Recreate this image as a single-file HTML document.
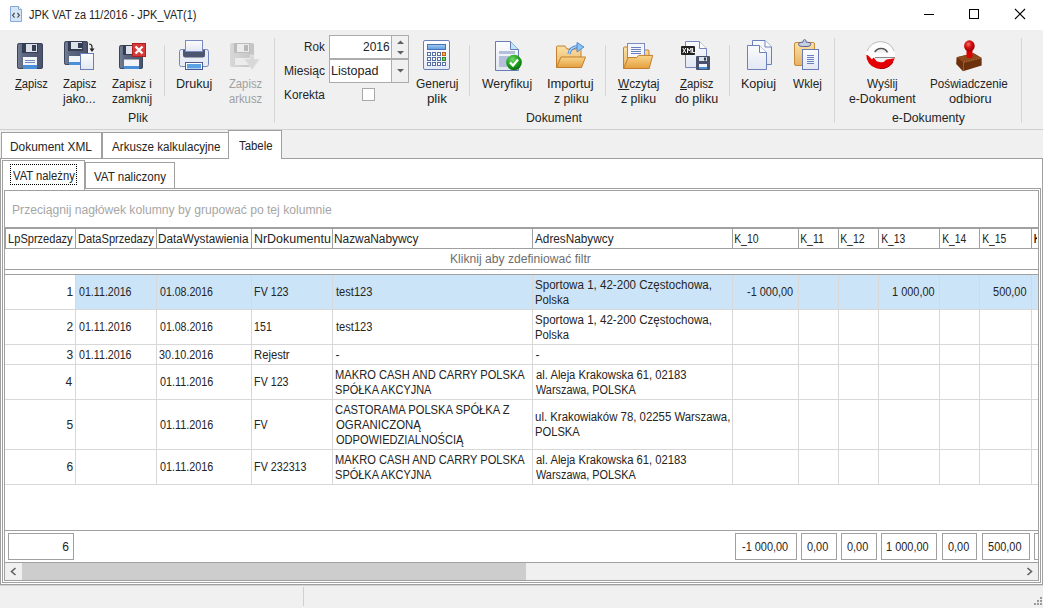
<!DOCTYPE html>
<html><head><meta charset="utf-8"><style>
html,body{margin:0;padding:0;} div{box-sizing:border-box}
body{width:1043px;height:608px;overflow:hidden;position:relative;background:#f0f0f0;font-family:"Liberation Sans",sans-serif;font-size:12px;}
.t{position:absolute;white-space:nowrap;font-size:12px;line-height:15px;height:15px;}
u{text-decoration:underline;text-underline-offset:1px}
</style></head><body>
<div style="position:absolute;left:0px;top:0px;width:1043px;height:30px;background:#fff"></div><div style="position:absolute;left:0px;top:129px;width:1043px;height:1px;background:#cfcfcf"></div><div style="position:absolute;left:274px;top:38px;width:1px;height:85px;background:#d5d5d5"></div><div style="position:absolute;left:834px;top:38px;width:1px;height:85px;background:#d5d5d5"></div><div style="position:absolute;left:1021px;top:38px;width:1px;height:85px;background:#d5d5d5"></div><div style="position:absolute;left:164px;top:45px;width:1px;height:51px;background:#d5d5d5"></div><div style="position:absolute;left:469px;top:45px;width:1px;height:51px;background:#d5d5d5"></div><div style="position:absolute;left:605px;top:45px;width:1px;height:51px;background:#d5d5d5"></div><div style="position:absolute;left:729px;top:45px;width:1px;height:51px;background:#d5d5d5"></div><div style="position:absolute;left:329px;top:35px;width:80px;height:24px;background:#fff;border:1px solid #acacac;box-sizing:border-box"></div><div style="position:absolute;left:329px;top:59px;width:80px;height:24px;background:#fff;border:1px solid #acacac;box-sizing:border-box"></div><div style="position:absolute;left:391px;top:36px;width:17px;height:22px;background:#f0f0f0;border-left:1px solid #acacac"></div><div style="position:absolute;left:391px;top:60px;width:17px;height:22px;background:#f0f0f0;border-left:1px solid #acacac"></div><div style="position:absolute;left:362px;top:88px;width:13px;height:13px;background:#fff;border:1px solid #a8a8a8"></div><div style="position:absolute;left:1px;top:132px;width:101px;height:27px;background:#fff;border:1px solid #a0a0a0;border-bottom:none;box-sizing:border-box"></div><div style="position:absolute;left:102px;top:132px;width:127px;height:27px;background:#fff;border:1px solid #a0a0a0;border-bottom:none;box-sizing:border-box"></div><div style="position:absolute;left:0px;top:158px;width:1043px;height:427px;background:#fff;border:1px solid #a0a0a0;box-sizing:border-box"></div><div style="position:absolute;left:228px;top:130px;width:54px;height:29px;background:#fff;border:1px solid #a0a0a0;border-bottom:none;box-sizing:border-box"></div><div style="position:absolute;left:85px;top:162px;width:90px;height:27px;background:#fff;border:1px solid #a0a0a0;border-bottom:none;box-sizing:border-box"></div><div style="position:absolute;left:2px;top:188px;width:1039px;height:395px;background:#fff;border:1px solid #a0a0a0;box-sizing:border-box"></div><div style="position:absolute;left:2px;top:160px;width:83px;height:30px;background:#fff;border:1px solid #a0a0a0;border-bottom:none;box-sizing:border-box"></div><div style="position:absolute;left:10px;top:164px;width:67px;height:21px;border:1px dotted #000;box-sizing:border-box"></div><div style="position:absolute;left:4px;top:190px;width:1035px;height:391px;background:#fff;border:1px solid #a0a0a0;box-sizing:border-box"></div><div style="position:absolute;left:5px;top:227px;width:1033px;height:1px;background:#a0a0a0"></div><div style="position:absolute;left:5px;top:228px;width:1033px;height:1px;background:#a0a0a0"></div><div style="position:absolute;left:5px;top:248px;width:1033px;height:1px;background:#a0a0a0"></div><div style="position:absolute;left:5px;top:229px;width:1px;height:19px;background:#a0a0a0"></div><div style="position:absolute;left:75px;top:229px;width:1px;height:19px;background:#a0a0a0"></div><div style="position:absolute;left:156px;top:229px;width:1px;height:19px;background:#a0a0a0"></div><div style="position:absolute;left:251px;top:229px;width:1px;height:19px;background:#a0a0a0"></div><div style="position:absolute;left:332px;top:229px;width:1px;height:19px;background:#a0a0a0"></div><div style="position:absolute;left:532px;top:229px;width:1px;height:19px;background:#a0a0a0"></div><div style="position:absolute;left:732px;top:229px;width:1px;height:19px;background:#a0a0a0"></div><div style="position:absolute;left:798px;top:229px;width:1px;height:19px;background:#a0a0a0"></div><div style="position:absolute;left:838px;top:229px;width:1px;height:19px;background:#a0a0a0"></div><div style="position:absolute;left:878px;top:229px;width:1px;height:19px;background:#a0a0a0"></div><div style="position:absolute;left:939px;top:229px;width:1px;height:19px;background:#a0a0a0"></div><div style="position:absolute;left:979px;top:229px;width:1px;height:19px;background:#a0a0a0"></div><div style="position:absolute;left:1031px;top:229px;width:1px;height:19px;background:#a0a0a0"></div><div style="position:absolute;left:5px;top:269px;width:1033px;height:1px;background:#a0a0a0"></div><div style="position:absolute;left:5px;top:274px;width:1033px;height:1px;background:#a0a0a0"></div><div style="position:absolute;left:76px;top:275px;width:962px;height:34px;background:#cce4f7"></div><div style="position:absolute;left:5px;top:309px;width:1033px;height:1px;background:#d8d8d8"></div><div style="position:absolute;left:5px;top:344px;width:1033px;height:1px;background:#d8d8d8"></div><div style="position:absolute;left:5px;top:364px;width:1033px;height:1px;background:#d8d8d8"></div><div style="position:absolute;left:5px;top:399px;width:1033px;height:1px;background:#d8d8d8"></div><div style="position:absolute;left:5px;top:449px;width:1033px;height:1px;background:#d8d8d8"></div><div style="position:absolute;left:5px;top:484px;width:1033px;height:1px;background:#d8d8d8"></div><div style="position:absolute;left:75px;top:275px;width:1px;height:209px;background:#d8d8d8"></div><div style="position:absolute;left:156px;top:275px;width:1px;height:209px;background:#d8d8d8"></div><div style="position:absolute;left:251px;top:275px;width:1px;height:209px;background:#d8d8d8"></div><div style="position:absolute;left:332px;top:275px;width:1px;height:209px;background:#d8d8d8"></div><div style="position:absolute;left:532px;top:275px;width:1px;height:209px;background:#d8d8d8"></div><div style="position:absolute;left:732px;top:275px;width:1px;height:209px;background:#d8d8d8"></div><div style="position:absolute;left:798px;top:275px;width:1px;height:209px;background:#d8d8d8"></div><div style="position:absolute;left:838px;top:275px;width:1px;height:209px;background:#d8d8d8"></div><div style="position:absolute;left:878px;top:275px;width:1px;height:209px;background:#d8d8d8"></div><div style="position:absolute;left:939px;top:275px;width:1px;height:209px;background:#d8d8d8"></div><div style="position:absolute;left:979px;top:275px;width:1px;height:209px;background:#d8d8d8"></div><div style="position:absolute;left:1031px;top:275px;width:1px;height:209px;background:#d8d8d8"></div><div style="position:absolute;left:5px;top:530px;width:1033px;height:1px;background:#a0a0a0"></div><div style="position:absolute;left:5px;top:562px;width:1033px;height:1px;background:#a0a0a0"></div><div style="position:absolute;left:8px;top:533px;width:66px;height:27px;border:1px solid #a0a0a0;box-sizing:border-box;background:#fff"></div><div style="position:absolute;left:735px;top:533px;width:62px;height:27px;border:1px solid #a0a0a0;box-sizing:border-box;background:#fff"></div><div style="position:absolute;left:801px;top:533px;width:36px;height:27px;border:1px solid #a0a0a0;box-sizing:border-box;background:#fff"></div><div style="position:absolute;left:841px;top:533px;width:36px;height:27px;border:1px solid #a0a0a0;box-sizing:border-box;background:#fff"></div><div style="position:absolute;left:881px;top:533px;width:56px;height:27px;border:1px solid #a0a0a0;box-sizing:border-box;background:#fff"></div><div style="position:absolute;left:942px;top:533px;width:35px;height:27px;border:1px solid #a0a0a0;box-sizing:border-box;background:#fff"></div><div style="position:absolute;left:982px;top:533px;width:48px;height:27px;border:1px solid #a0a0a0;box-sizing:border-box;background:#fff"></div><div style="position:absolute;left:1034px;top:533px;width:4px;height:27px;border:1px solid #a0a0a0;border-right:none;background:#fff"></div><div style="position:absolute;left:5px;top:563px;width:1033px;height:17px;background:#f0f0f0"></div><div style="position:absolute;left:22px;top:563px;width:504px;height:17px;background:#cdcdcd"></div><div style="position:absolute;left:0px;top:585px;width:1043px;height:1px;background:#d4d4d4"></div><div style="position:absolute;left:303px;top:587px;width:1px;height:19px;background:#d0d0d0"></div>

<svg width="1043" height="608" style="position:absolute;left:0;top:0">
<defs>
 <linearGradient id="fbody" x1="0" y1="0" x2="1" y2="0">
  <stop offset="0" stop-color="#7a849c"/><stop offset="0.25" stop-color="#5c6680"/><stop offset="1" stop-color="#4a536c"/>
 </linearGradient>
 <linearGradient id="fbodyg" x1="0" y1="0" x2="1" y2="0">
  <stop offset="0" stop-color="#d8d8d8"/><stop offset="1" stop-color="#c4c4c4"/>
 </linearGradient>
 <linearGradient id="page" x1="0" y1="0" x2="0" y2="1">
  <stop offset="0" stop-color="#fbfcfe"/><stop offset="1" stop-color="#e2e7f2"/>
 </linearGradient>
 <linearGradient id="fold" x1="0" y1="0" x2="0" y2="1">
  <stop offset="0" stop-color="#f8d58a"/><stop offset="1" stop-color="#e4a040"/>
 </linearGradient>
 <linearGradient id="foldb" x1="0" y1="0" x2="0" y2="1">
  <stop offset="0" stop-color="#fbe3a8"/><stop offset="1" stop-color="#e8b060"/>
 </linearGradient>
 <radialGradient id="green" cx="0.4" cy="0.3" r="0.7">
  <stop offset="0" stop-color="#6fd86a"/><stop offset="0.6" stop-color="#1f9f1f"/><stop offset="1" stop-color="#0c6e0c"/>
 </radialGradient>
 <radialGradient id="knob" cx="0.4" cy="0.35" r="0.6">
  <stop offset="0" stop-color="#f07070"/><stop offset="0.5" stop-color="#d81010"/><stop offset="1" stop-color="#a00000"/>
 </radialGradient>
 <linearGradient id="calc" x1="0" y1="0" x2="0" y2="1">
  <stop offset="0" stop-color="#ffffff"/><stop offset="1" stop-color="#e4eaf6"/>
 </linearGradient>
 <linearGradient id="lcd" x1="0" y1="0" x2="0" y2="1">
  <stop offset="0" stop-color="#a8d0f4"/><stop offset="1" stop-color="#5a9ae0"/>
 </linearGradient>
</defs>

<!-- title icon -->
<path d="M10.5 6.5 H18.5 L21.5 9.5 V21.5 H10.5 Z" fill="#d4e6f8" stroke="#88a8d8"/>
<path d="M18.5 6.5 V9.5 H21.5" fill="#fff" stroke="#88a8d8"/>
<path d="M14.6 13 L12.6 15.3 L14.6 17.6 M17.4 13 L19.4 15.3 L17.4 17.6" stroke="#505050" fill="none" stroke-width="1.2"/>

<!-- window controls -->
<rect x="924" y="14" width="10" height="1" fill="#000"/>
<rect x="969.5" y="9.5" width="9" height="9" fill="none" stroke="#000"/>
<path d="M1015 9 L1025 19 M1025 9 L1015 19" stroke="#000" stroke-width="1.1"/>

<!-- floppy 1 -->
<rect x="17" y="43" width="26" height="26" rx="2" fill="url(#fbody)"/>
<rect x="17.5" y="43.5" width="25" height="25" rx="2" fill="none" stroke="#3c445a"/>
<rect x="22" y="43" width="16" height="10" fill="#353d52"/>
<rect x="26" y="44" width="11" height="8" fill="#dde1ea"/>
<rect x="32" y="45" width="4" height="6" fill="#353d52"/>
<rect x="23" y="57" width="14" height="12" fill="#f2f4f8"/>
<rect x="25" y="60" width="10" height="1" fill="#7088c0"/>
<rect x="25" y="62" width="10" height="1" fill="#7088c0"/>
<rect x="23" y="65" width="14" height="4" fill="#4a90d8"/>

<!-- floppy 2 (save as) -->
<rect x="64" y="41" width="24" height="24" rx="2" fill="url(#fbody)"/>
<rect x="64.5" y="41.5" width="23" height="23" rx="2" fill="none" stroke="#3c445a"/>
<rect x="68" y="41" width="15" height="10" fill="#353d52"/>
<rect x="71" y="42" width="11" height="7" fill="#dde1ea"/>
<rect x="78" y="43" width="4" height="5" fill="#353d52"/>
<rect x="69" y="56" width="12" height="9" fill="#f2f4f8"/>
<rect x="69" y="62" width="12" height="3" fill="#4a90d8"/>
<rect x="80.5" y="53.5" width="13" height="16" fill="url(#page)" stroke="#6c7cb4"/>
<path d="M89 44 Q92 44 92 47 V50" stroke="#222" fill="none" stroke-width="1.2"/>
<path d="M89.5 48.5 H94.5 L92 52 Z" fill="#222"/>

<!-- floppy 3 (save & close) -->
<rect x="119" y="45" width="24" height="24" rx="2" fill="url(#fbody)"/>
<rect x="119.5" y="45.5" width="23" height="23" rx="2" fill="none" stroke="#3c445a"/>
<rect x="123" y="45" width="15" height="10" fill="#353d52"/>
<rect x="126" y="46" width="8" height="8" fill="#dde1ea"/>
<rect x="124" y="59.5" width="15" height="9.5" fill="#f2f4f8"/>
<rect x="124" y="66" width="15" height="3" fill="#4a90d8"/>
<rect x="132" y="43" width="14" height="14" fill="#d83a3a"/>
<rect x="132.5" y="43.5" width="13" height="13" fill="none" stroke="#b02020"/>
<path d="M135.5 46.5 L142.5 53.5 M142.5 46.5 L135.5 53.5" stroke="#fff" stroke-width="2.4"/>

<!-- printer -->
<rect x="179.5" y="49.5" width="29" height="17" rx="2" fill="#e8ecf5" stroke="#7486bc"/>
<path d="M183 50 H205 V55 Q205 57.5 202.5 57.5 H185.5 Q183 57.5 183 55 Z" fill="#4c5670"/>
<rect x="185.5" y="40.5" width="17" height="11" fill="url(#page)" stroke="#7a8ac0"/>
<rect x="185.5" y="62.5" width="17" height="7" fill="#fff" stroke="#4a5a98"/>
<rect x="187" y="64" width="14" height="4.5" fill="#5aa2e4"/>
<!-- disabled floppy -->
<rect x="230" y="43" width="24" height="24" rx="2" fill="url(#fbodyg)"/>
<rect x="234" y="43" width="16" height="10" fill="#bcbcbc"/>
<rect x="237" y="44" width="12" height="8" fill="#ececec"/>
<rect x="244" y="45" width="4" height="6" fill="#b8b8b8"/>
<rect x="235" y="58" width="15" height="7" fill="#ececec"/>
<path d="M250 55 H254 V59 H259.7 L252 69.7 L244.4 59 H250 Z" fill="#d8d8d8" stroke="#e8e8e8" stroke-width="0.5"/>

<!-- calculator -->
<rect x="423.5" y="40.5" width="26" height="29" rx="1.5" fill="url(#calc)" stroke="#6a80b8"/>
<rect x="427.5" y="44.5" width="18" height="5" fill="url(#lcd)" stroke="#4a72b4"/>
<g fill="#fff" stroke="#5a6ea6">
<rect x="427.5" y="52.5" width="3" height="3"/><rect x="432.5" y="52.5" width="3" height="3"/><rect x="437.5" y="52.5" width="3" height="3"/>
<rect x="427.5" y="57.5" width="3" height="3"/><rect x="432.5" y="57.5" width="3" height="3"/><rect x="437.5" y="57.5" width="3" height="3"/>
<rect x="427.5" y="62.5" width="3" height="3"/><rect x="432.5" y="62.5" width="3" height="3"/><rect x="437.5" y="62.5" width="3" height="3"/><rect x="442.5" y="62.5" width="3" height="3"/>
</g>
<rect x="442.5" y="52.5" width="3" height="3" fill="#f6c050" stroke="#c06010"/>
<rect x="442.5" y="57.5" width="3" height="3" fill="#7ad060" stroke="#2a8a2a"/>

<!-- weryfikuj -->
<path d="M495.5 41.5 H510.5 L518.5 49.5 V70.5 H495.5 Z" fill="url(#page)" stroke="#6a7cb4"/>
<path d="M510.5 41.5 V49.5 H518.5" fill="#bfe4f8" stroke="#6a7cb4"/>
<rect x="499" y="51" width="16" height="3" fill="#b4c0da"/>
<rect x="499" y="56" width="10" height="11" fill="#b4c0da"/>
<circle cx="514" cy="62.5" r="7.8" fill="url(#green)"/>
<path d="M510 62.5 L513 65.5 L518 59.5" stroke="#fff" stroke-width="2.2" fill="none"/>

<!-- import folder -->
<path d="M556.5 67.5 V47 Q556.5 46 557.5 46 H565 L567 49 H580 Q581 49 581 50 V67.5 Z" fill="url(#foldb)" stroke="#c47f2c"/>
<path d="M561 57 H585.5 L581.5 67.5 H556.5 Z" fill="url(#fold)" stroke="#c47f2c"/>
<path d="M569 54 Q570 47 578 46.5" stroke="#3a78d0" stroke-width="3" fill="none"/>
<path d="M569 54 Q570 47 578 46.5" stroke="#a8d4f8" stroke-width="1.5" fill="none"/>
<path d="M577 42.5 L584 47 L577 52 Z" fill="#8cc4f4" stroke="#3a78d0" stroke-width="0.8"/>

<!-- wczytaj folder -->
<path d="M623.5 68.5 V48 Q623.5 47 624.5 47 H631 L633 50 H648 Q649 50 649 51 V68.5 Z" fill="url(#foldb)" stroke="#c47f2c"/>
<rect x="627.5" y="43.5" width="17" height="14" fill="#f4f6fc" stroke="#7a8cc4"/>
<g fill="#6a80c0"><rect x="631" y="47" width="10" height="1"/><rect x="631" y="49" width="10" height="1"/><rect x="631" y="51" width="10" height="1"/><rect x="631" y="53" width="10" height="1"/></g>
<path d="M628.3 57.6 H636.7 L638.6 55.4 H652.7 L649.2 68.5 H623.5 Z" fill="url(#fold)" stroke="#c47f2c"/>

<!-- xml doc -->
<path d="M685.5 41.5 H699.5 L706.5 48.5 V67.5 H685.5 Z" fill="url(#page)" stroke="#7486c0"/>
<path d="M699.5 41.5 V48.5 H706.5" fill="#fff" stroke="#7486c0"/>
<rect x="681" y="46" width="14" height="9" rx="1" fill="#222"/>
<path d="M682.8 48 L685.8 53 M685.8 48 L682.8 53 M687.5 53 V48 L689.3 51 L691.1 48 V53 M692.6 48 V52.5 H694.8" stroke="#fff" stroke-width="1" fill="none"/>
<rect x="696" y="56" width="14" height="14" rx="1" fill="#48526c"/>
<rect x="699" y="57" width="8" height="4" fill="#dde1ea"/>
<rect x="704" y="57.5" width="2" height="3" fill="#353d52"/>
<rect x="699" y="64" width="8" height="5" fill="#f2f4f8"/>
<rect x="699" y="67" width="8" height="2" fill="#4a90d8"/>

<!-- kopiuj -->
<path d="M752.5 40.5 H765 L771.5 47 V64.5 H752.5 Z" fill="url(#page)" stroke="#6e80bc"/>
<path d="M765 40.5 V47 H771.5" fill="#fff" stroke="#6e80bc"/>
<path d="M747.5 45.5 H759.5 L766.5 52.5 V69.5 H747.5 Z" fill="url(#page)" stroke="#6e80bc"/>
<path d="M759.5 45.5 V52.5 H766.5" fill="#fff" stroke="#6e80bc"/>

<!-- wklej -->
<rect x="794.5" y="42.5" width="20" height="23" rx="1.5" fill="url(#foldb)" stroke="#c88a3a"/>
<path d="M798.5 44.3 Q798.5 42.2 801.8 42.2 H803 Q803 39.6 804.6 39.6 Q806.2 39.6 806.2 42.2 H807.6 Q810.8 42.2 810.8 44.3 Q810.8 46.5 807 46.5 H802.3 Q798.5 46.5 798.5 44.3 Z" fill="#c6cee2" stroke="#56648e"/>
<rect x="802.5" y="49.5" width="16" height="20" fill="url(#page)" stroke="#6a7cb8"/>
<g fill="#6a80c0"><rect x="807" y="55" width="7" height="1"/><rect x="807" y="57" width="7" height="1"/><rect x="807" y="59" width="7" height="1"/><rect x="807" y="61" width="7" height="1"/><rect x="807" y="63" width="7" height="1"/></g>

<!-- e-dokument -->
<ellipse cx="880.5" cy="55.5" rx="14.3" ry="13.5" fill="#fdfdfd"/>
<path d="M867.2 51 A14 13.2 0 0 1 894 51" stroke="#bdbdbd" stroke-width="1" fill="none"/>
<ellipse cx="881" cy="56" rx="6.8" ry="6.2" fill="#f0f0f0"/>
<path d="M874.8 52.5 A6.6 5.8 0 0 1 887.4 52.5" stroke="#555" stroke-width="1.6" fill="none"/>
<rect x="874" y="52.8" width="21" height="4.4" fill="#fdfdfd"/>
<rect x="875" y="57" width="20" height="1" fill="#8a8a8a"/>
<path d="M866.3 55 A14.3 13.5 0 0 0 892.5 63 L894.8 58.2 L886.5 59.6 A6.8 6.2 0 0 1 874.6 58.6 L870.5 55.5 Z" fill="#e40000"/>
<path d="M880 68.5 A14 13 0 0 0 893 62" stroke="#a00000" stroke-width="1" fill="none"/>
<path d="M865.2 52.2 L876.8 52.4 L872 59.5 Z" fill="#fdfdfd"/>
<!-- stamp -->
<path d="M956.6 57.2 L973.7 53.2 L981.6 57.9 L981.6 65.4 L963 71.3 L956.2 64.1 Z" fill="#6c300c"/>
<path d="M956.6 57.2 L973.7 53.2 L981.6 57.9 L963.5 62.5 Z" fill="#8e4a1c"/>
<path d="M963.5 62.5 L981.6 57.9" stroke="#c8906a" stroke-width="0.6" stroke-dasharray="1.5 1"/>
<path d="M963.5 62.5 V71" stroke="#b07a58" stroke-width="0.6"/>
<rect x="966.5" y="49" width="6" height="9" rx="2" fill="#d00"/>
<ellipse cx="969.4" cy="46" rx="5.3" ry="5.8" fill="url(#knob)"/>

<!-- spin arrows -->
<path d="M397 44 L400.5 40.5 L404 44 Z" fill="#606060"/>
<path d="M397 51 L400.5 54.5 L404 51 Z" fill="#606060"/>
<path d="M397 69 L400.5 72.5 L404 69 Z" fill="#606060"/>

<!-- scroll arrows -->
<path d="M15.5 568 L11.5 571.5 L15.5 575" stroke="#606060" stroke-width="1.6" fill="none"/>
<path d="M1027.5 568 L1031.5 571.5 L1027.5 575" stroke="#606060" stroke-width="1.6" fill="none"/>

<!-- size grip -->
<g fill="#999">
<rect x="1040" y="597" width="2" height="2"/>
<rect x="1037" y="600" width="2" height="2"/><rect x="1040" y="600" width="2" height="2"/>
<rect x="1034" y="603" width="2" height="2"/><rect x="1037" y="603" width="2" height="2"/><rect x="1040" y="603" width="2" height="2"/>
</g>
</svg>

<div class="t" style="left:29.00px;top:8px;transform:scaleX(0.9093);transform-origin:0px 0;color:#242424">JPK VAT za 11/2016 - JPK_VAT(1)</div><div class="t" style="left:14.50px;top:77px;transform:scaleX(0.9286);transform-origin:0px 0;color:#242424"><u>Z</u>apisz</div><div class="t" style="left:63.00px;top:77px;transform:scaleX(0.9429);transform-origin:0px 0;color:#242424">Zapisz</div><div class="t" style="left:63.20px;top:92px;transform:scaleX(1.0161);transform-origin:0px 0;color:#242424">jako...</div><div class="t" style="left:112.40px;top:77px;transform:scaleX(0.9610);transform-origin:0px 0;color:#242424">Zapisz i</div><div class="t" style="left:112.40px;top:92px;transform:scaleX(0.9850);transform-origin:0px 0;color:#242424">zamknij</div><div class="t" style="left:176.30px;top:77px;transform:scaleX(1.0515);transform-origin:1px 0;color:#242424">Drukuj</div><div class="t" style="left:228.60px;top:77px;transform:scaleX(0.9371);transform-origin:0px 0;color:#a0a0a0">Zapisz</div><div class="t" style="left:228.60px;top:92px;transform:scaleX(0.9371);transform-origin:0px 0;color:#a0a0a0">arkusz</div><div class="t" style="left:127.50px;top:111px;transform:scaleX(1.0278);transform-origin:1px 0;color:#242424">Plik</div><div class="t" style="left:303.60px;top:40px;transform:scaleX(0.9700);transform-origin:1px 0;color:#242424">Rok</div><div class="t" style="left:283.70px;top:64px;transform:scaleX(1.0077);transform-origin:1px 0;color:#242424">Miesiąc</div><div class="t" style="left:284.30px;top:88px;transform:scaleX(0.9850);transform-origin:1px 0;color:#242424">Korekta</div><div class="t" style="left:363.00px;top:40px;transform:scaleX(1.0000);transform-origin:1px 0;color:#242424">2016</div><div class="t" style="left:331.00px;top:64px;transform:scaleX(1.0455);transform-origin:1px 0;color:#242424">Listopad</div><div class="t" style="left:416.20px;top:77px;transform:scaleX(0.9951);transform-origin:1px 0;color:#242424">Generuj</div><div class="t" style="left:427.00px;top:92px;transform:scaleX(1.1176);transform-origin:1px 0;color:#242424">plik</div><div class="t" style="left:482.00px;top:77px;transform:scaleX(1.0204);transform-origin:0px 0;color:#242424">Weryfikuj</div><div class="t" style="left:547.10px;top:77px;transform:scaleX(1.0786);transform-origin:1px 0;color:#242424">Importuj</div><div class="t" style="left:553.80px;top:92px;transform:scaleX(1.0212);transform-origin:0px 0;color:#242424">z pliku</div><div class="t" style="left:525.50px;top:111px;transform:scaleX(1.0222);transform-origin:1px 0;color:#242424">Dokument</div><div class="t" style="left:618.00px;top:77px;transform:scaleX(0.9878);transform-origin:0px 0;color:#242424"><u>W</u>czytaj</div><div class="t" style="left:620.60px;top:92px;transform:scaleX(1.0303);transform-origin:0px 0;color:#242424">z pliku</div><div class="t" style="left:679.80px;top:77px;transform:scaleX(0.9486);transform-origin:0px 0;color:#242424"><u>Z</u>apisz</div><div class="t" style="left:675.30px;top:92px;transform:scaleX(1.0415);transform-origin:0px 0;color:#242424">do pliku</div><div class="t" style="left:741.40px;top:77px;transform:scaleX(1.0500);transform-origin:1px 0;color:#242424">Kopiuj</div><div class="t" style="left:792.50px;top:77px;transform:scaleX(0.9828);transform-origin:0px 0;color:#242424">Wklej</div><div class="t" style="left:866.50px;top:77px;transform:scaleX(0.9839);transform-origin:0px 0;color:#242424">Wyślij</div><div class="t" style="left:848.60px;top:92px;transform:scaleX(1.0185);transform-origin:0px 0;color:#242424">e-Dokument</div><div class="t" style="left:930.20px;top:77px;transform:scaleX(0.9722);transform-origin:1px 0;color:#242424">Poświadczenie</div><div class="t" style="left:948.50px;top:92px;transform:scaleX(1.0641);transform-origin:0px 0;color:#242424">odbioru</div><div class="t" style="left:891.50px;top:111px;transform:scaleX(1.0211);transform-origin:0px 0;color:#242424">e-Dokumenty</div><div class="t" style="left:9.80px;top:140px;transform:scaleX(0.9902);transform-origin:1px 0;color:#242424">Dokument XML</div><div class="t" style="left:111.50px;top:140px;transform:scaleX(0.9688);transform-origin:0px 0;color:#242424">Arkusze kalkulacyjne</div><div class="t" style="left:238.60px;top:139px;transform:scaleX(0.9486);transform-origin:0px 0;color:#242424">Tabele</div><div class="t" style="left:12.70px;top:169px;transform:scaleX(0.9364);transform-origin:0px 0;color:#242424">VAT należny</div><div class="t" style="left:93.50px;top:170px;transform:scaleX(0.9627);transform-origin:0px 0;color:#242424">VAT naliczony</div><div class="t" style="left:12.40px;top:203px;transform:scaleX(1.0114);transform-origin:1px 0;color:#a6a6a6">Przeciągnij nagłówek kolumny by grupować po tej kolumnie</div><div class="t" style="left:7.70px;top:232px;transform:scaleX(0.9217);transform-origin:1px 0;color:#242424">LpSprzedazy</div><div class="t" style="left:77.50px;top:232px;transform:scaleX(0.9235);transform-origin:1px 0;color:#242424">DataSprzedazy</div><div class="t" style="left:158.00px;top:232px;transform:scaleX(0.9761);transform-origin:1px 0;color:#242424">DataWystawienia</div><div class="t" style="left:253.50px;top:232px;transform:scaleX(1.0389);transform-origin:1px 0;color:#242424">NrDokumentu</div><div class="t" style="left:334.20px;top:232px;transform:scaleX(0.9893);transform-origin:1px 0;color:#242424">NazwaNabywcy</div><div class="t" style="left:535.40px;top:232px;transform:scaleX(0.9812);transform-origin:0px 0;color:#242424">AdresNabywcy</div><div class="t" style="left:734.40px;top:232px;transform:scaleX(0.8741);transform-origin:1px 0;color:#242424">K_10</div><div class="t" style="left:800.40px;top:232px;transform:scaleX(0.8692);transform-origin:1px 0;color:#242424">K_11</div><div class="t" style="left:840.30px;top:232px;transform:scaleX(0.8741);transform-origin:1px 0;color:#242424">K_12</div><div class="t" style="left:880.50px;top:232px;transform:scaleX(0.8630);transform-origin:1px 0;color:#242424">K_13</div><div class="t" style="left:941.80px;top:232px;transform:scaleX(0.8556);transform-origin:1px 0;color:#242424">K_14</div><div class="t" style="left:981.50px;top:232px;transform:scaleX(0.8630);transform-origin:1px 0;color:#242424">K_15</div><div class="t" style="left:450.40px;top:252px;transform:scaleX(1.0101);transform-origin:1px 0;color:#6d6d6d">Kliknij aby zdefiniować filtr</div><div class="t" style="left:66.50px;top:285px;transform:scaleX(1.0000);transform-origin:1px 0;color:#242424">1</div><div class="t" style="left:66.50px;top:320px;transform:scaleX(1.0000);transform-origin:1px 0;color:#242424">2</div><div class="t" style="left:66.50px;top:348px;transform:scaleX(1.0000);transform-origin:1px 0;color:#242424">3</div><div class="t" style="left:65.50px;top:375px;transform:scaleX(1.0000);transform-origin:0px 0;color:#242424">4</div><div class="t" style="left:66.50px;top:418px;transform:scaleX(1.0000);transform-origin:1px 0;color:#242424">5</div><div class="t" style="left:66.50px;top:460px;transform:scaleX(1.0000);transform-origin:1px 0;color:#242424">6</div><div class="t" style="left:78.50px;top:285px;transform:scaleX(0.8881);transform-origin:0px 0;color:#242424">01.11.2016</div><div class="t" style="left:78.50px;top:320px;transform:scaleX(0.8881);transform-origin:0px 0;color:#242424">01.11.2016</div><div class="t" style="left:78.50px;top:348px;transform:scaleX(0.8881);transform-origin:0px 0;color:#242424">01.11.2016</div><div class="t" style="left:159.50px;top:285px;transform:scaleX(0.8817);transform-origin:0px 0;color:#242424">01.08.2016</div><div class="t" style="left:159.50px;top:320px;transform:scaleX(0.8817);transform-origin:0px 0;color:#242424">01.08.2016</div><div class="t" style="left:158.50px;top:348px;transform:scaleX(0.9017);transform-origin:1px 0;color:#242424">30.10.2016</div><div class="t" style="left:159.50px;top:375px;transform:scaleX(0.9017);transform-origin:0px 0;color:#242424">01.11.2016</div><div class="t" style="left:159.50px;top:418px;transform:scaleX(0.9017);transform-origin:0px 0;color:#242424">01.11.2016</div><div class="t" style="left:159.50px;top:460px;transform:scaleX(0.9017);transform-origin:0px 0;color:#242424">01.11.2016</div><div class="t" style="left:253.50px;top:285px;transform:scaleX(0.8892);transform-origin:1px 0;color:#242424">FV 123</div><div class="t" style="left:253.50px;top:320px;transform:scaleX(0.8842);transform-origin:1px 0;color:#242424">151</div><div class="t" style="left:253.50px;top:348px;transform:scaleX(0.9351);transform-origin:1px 0;color:#242424">Rejestr</div><div class="t" style="left:253.50px;top:375px;transform:scaleX(0.8892);transform-origin:1px 0;color:#242424">FV 123</div><div class="t" style="left:253.50px;top:418px;transform:scaleX(0.8857);transform-origin:1px 0;color:#242424">FV</div><div class="t" style="left:253.50px;top:460px;transform:scaleX(0.8930);transform-origin:1px 0;color:#242424">FV 232313</div><div class="t" style="left:335.50px;top:285px;transform:scaleX(0.9256);transform-origin:0px 0;color:#242424">test123</div><div class="t" style="left:335.50px;top:320px;transform:scaleX(0.9256);transform-origin:0px 0;color:#242424">test123</div><div class="t" style="left:335.50px;top:348px;transform:scaleX(1.0000);transform-origin:0px 0;color:#242424">-</div><div class="t" style="left:334.50px;top:368px;transform:scaleX(0.9255);transform-origin:1px 0;color:#242424">MAKRO CASH AND CARRY POLSKA</div><div class="t" style="left:334.50px;top:383px;transform:scaleX(0.9143);transform-origin:1px 0;color:#242424">SPÓŁKA AKCYJNA</div><div class="t" style="left:334.50px;top:403px;transform:scaleX(0.9323);transform-origin:1px 0;color:#242424">CASTORAMA POLSKA SPÓŁKA Z</div><div class="t" style="left:335.50px;top:418px;transform:scaleX(0.9494);transform-origin:0px 0;color:#242424">OGRANICZONĄ</div><div class="t" style="left:335.50px;top:433px;transform:scaleX(0.9232);transform-origin:0px 0;color:#242424">ODPOWIEDZIALNOŚCIĄ</div><div class="t" style="left:334.50px;top:453px;transform:scaleX(0.9255);transform-origin:1px 0;color:#242424">MAKRO CASH AND CARRY POLSKA</div><div class="t" style="left:334.50px;top:468px;transform:scaleX(0.9143);transform-origin:1px 0;color:#242424">SPÓŁKA AKCYJNA</div><div class="t" style="left:534.50px;top:278px;transform:scaleX(0.9641);transform-origin:1px 0;color:#242424">Sportowa 1, 42-200 Częstochowa,</div><div class="t" style="left:534.50px;top:293px;transform:scaleX(0.9400);transform-origin:1px 0;color:#242424">Polska</div><div class="t" style="left:534.50px;top:313px;transform:scaleX(0.9641);transform-origin:1px 0;color:#242424">Sportowa 1, 42-200 Częstochowa,</div><div class="t" style="left:534.50px;top:328px;transform:scaleX(0.9400);transform-origin:1px 0;color:#242424">Polska</div><div class="t" style="left:535.50px;top:348px;transform:scaleX(1.0000);transform-origin:0px 0;color:#242424">-</div><div class="t" style="left:535.50px;top:368px;transform:scaleX(0.9369);transform-origin:0px 0;color:#242424">al. Aleja Krakowska 61, 02183</div><div class="t" style="left:535.50px;top:383px;transform:scaleX(0.9055);transform-origin:0px 0;color:#242424">Warszawa, POLSKA</div><div class="t" style="left:534.50px;top:410px;transform:scaleX(0.9495);transform-origin:1px 0;color:#242424">ul. Krakowiaków 78, 02255 Warszawa,</div><div class="t" style="left:534.50px;top:425px;transform:scaleX(0.9300);transform-origin:1px 0;color:#242424">POLSKA</div><div class="t" style="left:535.50px;top:453px;transform:scaleX(0.9369);transform-origin:0px 0;color:#242424">al. Aleja Krakowska 61, 02183</div><div class="t" style="left:535.50px;top:468px;transform:scaleX(0.9055);transform-origin:0px 0;color:#242424">Warszawa, POLSKA</div><div class="t" style="left:747.30px;top:285px;transform:scaleX(0.9100);transform-origin:0px 0;color:#242424">-1 000,00</div><div class="t" style="left:891.65px;top:285px;transform:scaleX(0.9100);transform-origin:1px 0;color:#242424">1 000,00</div><div class="t" style="left:993.05px;top:285px;transform:scaleX(0.9100);transform-origin:1px 0;color:#242424">500,00</div><div class="t" style="left:62.20px;top:540px;transform:scaleX(1.0000);transform-origin:1px 0;color:#242424">6</div><div class="t" style="left:742.15px;top:540px;transform:scaleX(0.9100);transform-origin:0px 0;color:#242424">-1 000,00</div><div class="t" style="left:807.18px;top:540px;transform:scaleX(0.9100);transform-origin:0px 0;color:#242424">0,00</div><div class="t" style="left:847.43px;top:540px;transform:scaleX(0.9100);transform-origin:0px 0;color:#242424">0,00</div><div class="t" style="left:886.42px;top:540px;transform:scaleX(0.9100);transform-origin:1px 0;color:#242424">1 000,00</div><div class="t" style="left:947.93px;top:540px;transform:scaleX(0.9100);transform-origin:0px 0;color:#242424">0,00</div><div class="t" style="left:987.77px;top:540px;transform:scaleX(0.9100);transform-origin:1px 0;color:#242424">500,00</div>
<div style="position:absolute;left:1032px;top:232px;width:5px;height:15px;overflow:hidden"><div class="t" style="left:1.4px;top:0;color:#000">K</div></div>
</body></html>
